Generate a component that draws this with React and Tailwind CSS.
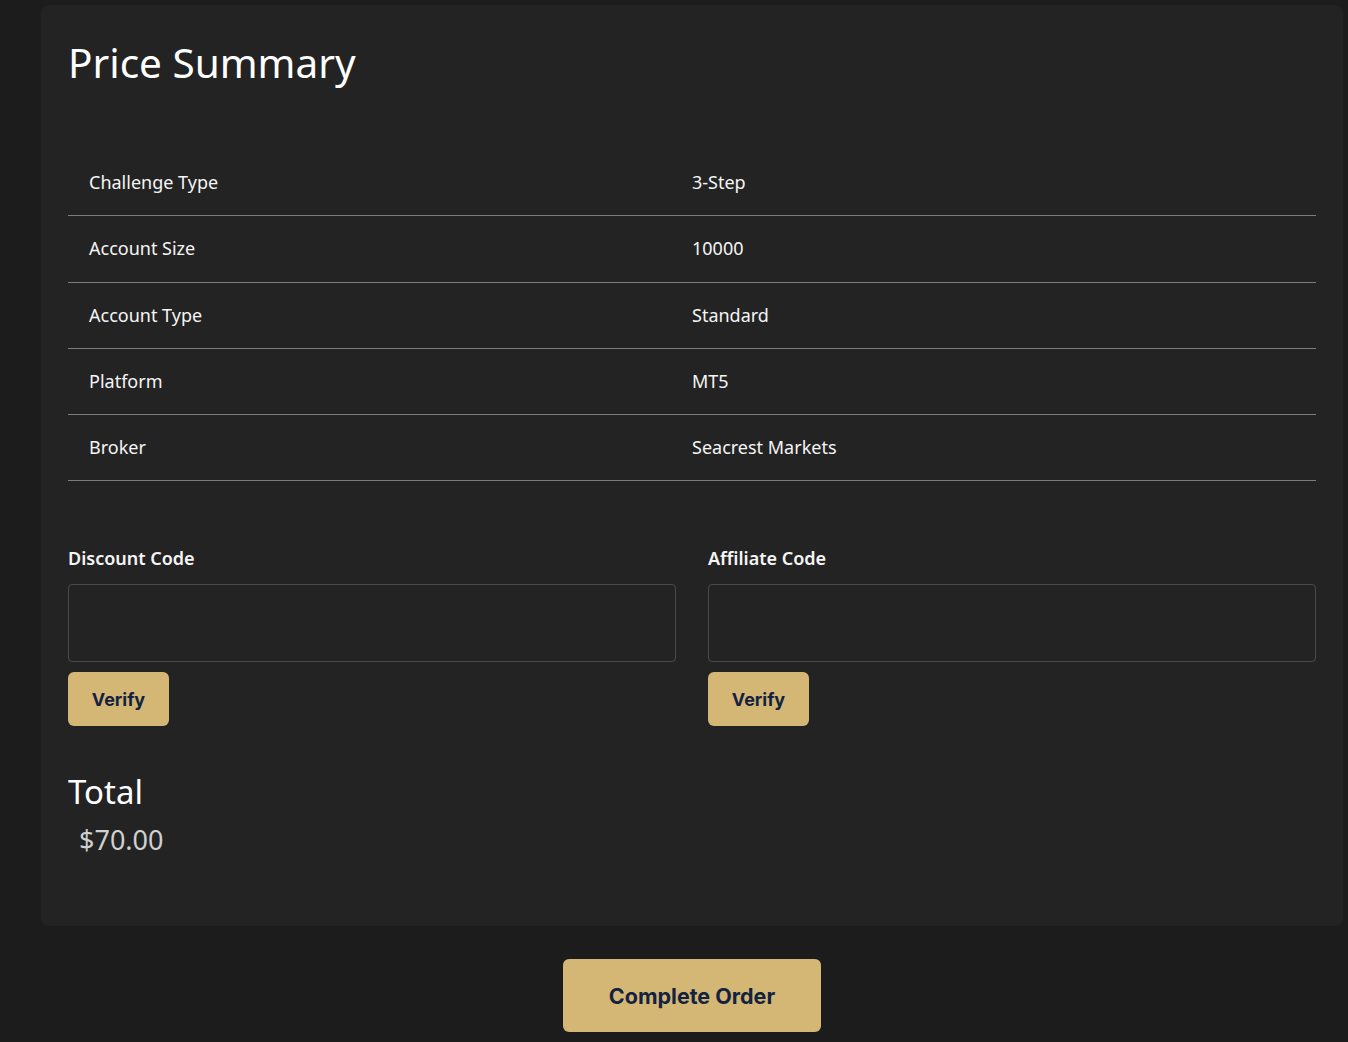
const rows = [
  { label: 'Challenge Type', value: '3-Step' },
  { label: 'Account Size', value: '10000' },
  { label: 'Account Type', value: 'Standard' },
  { label: 'Platform', value: 'MT5' },
  { label: 'Broker', value: 'Seacrest Markets' },
]

const body = { fontFamily: '"Noto Sans", "Open Sans", sans-serif' }
const btn = { fontFamily: 'Inter, "Liberation Sans", sans-serif' }

function CodeField({ label }) {
  return (
    <div className="flex flex-col">
      <label className="text-[18px] leading-[27px] font-semibold text-[#f5f5f5]">{label}</label>
      <input
        type="text"
        className="mt-[12px] h-[78px] w-full rounded-[4px] border border-[#4a4a4a] bg-[#232323] px-3 text-white outline-none"
      />
      <button
        style={btn}
        className="mt-[10px] h-[54px] w-[101px] rounded-[6px] bg-[#d4b775] text-[18px] font-bold text-[#13233f]"
      >
        Verify
      </button>
    </div>
  )
}

export default function App() {
  return (
    <div style={body} className="min-h-screen bg-[#1c1c1c] pl-[41px] pr-[5px] pt-[5px] pb-[10px]">
      {/* Card */}
      <div className="rounded-lg bg-[#232323] px-[27px] pt-[34px] pb-[67px]">
        <h2 className="text-[40.5px] leading-[48px] font-normal text-white">Price Summary</h2>

        {/* Summary table */}
        <div className="mt-[63px]">
          {rows.map((r) => (
            <div key={r.label} className="grid h-[66.3px] grid-cols-[603px_1fr] items-center border-b border-[#7d7d7d] text-[18px] text-[#f5f5f5]">
              <span className="pl-[21px]">{r.label}</span>
              <span className="pl-[21px]">{r.value}</span>
            </div>
          ))}
        </div>

        {/* Codes */}
        <div className="mt-[64px] grid grid-cols-2 gap-[32px]">
          <CodeField label="Discount Code" />
          <CodeField label="Affiliate Code" />
        </div>

        {/* Total */}
        <div className="mt-[47px]">
          <h3 className="text-[33px] leading-[38px] text-white">Total</h3>
          <p className="ml-[11px] mt-[10px] text-[27px] leading-[38px] text-[#d0d0d0]">$70.00</p>
        </div>
      </div>

      <div className="mt-[33px] flex justify-center">
        <button
          style={btn}
          className="h-[73px] w-[258px] rounded-[6px] bg-[#d4b775] text-[21.5px] font-bold text-[#13233f]"
        >
          Complete Order
        </button>
      </div>
    </div>
  )
}
